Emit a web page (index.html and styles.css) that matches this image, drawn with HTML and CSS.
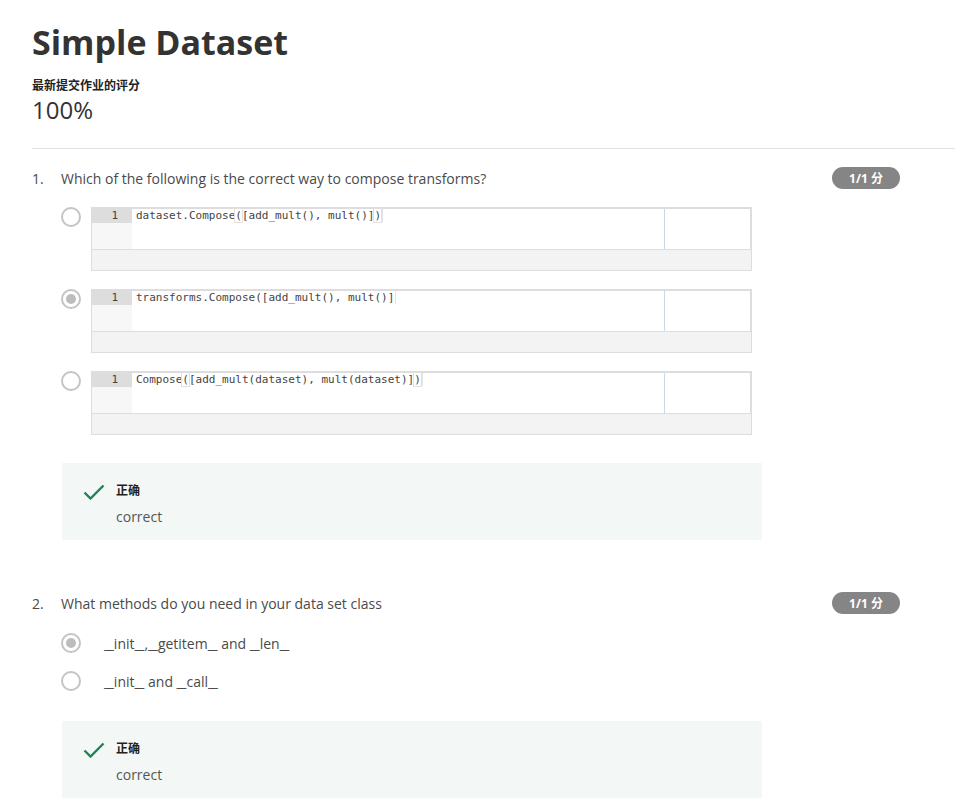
FILE: index.html
```html
<!DOCTYPE html>
<html lang="zh">
<head>
<meta charset="utf-8">
<title>Simple Dataset</title>
<link rel="stylesheet" href="styles.css">
</head>
<body>
<div class="page">
  <header class="head">
    <h1 class="title">Simple Dataset</h1>
    <div class="grade-label">最新提交作业的评分</div>
    <div class="grade">100%</div>
  </header>

  <section class="question">
    <div class="q-row">
      <span class="q-num">1.</span>
      <span class="q-text">Which of the following is the correct way to compose transforms?</span>
      <span class="badge">1/1 分</span>
    </div>
    <div class="options code-options">
      <div class="code-opt">
        <span class="radio"></span>
        <div class="code">
          <div class="editor">
            <div class="gutter"><div class="ln">1</div></div>
            <div class="src"><span>dataset.Compose<span class="br">(</span>[add_mult(), mult()]<span class="br">)</span></span></div>
            <div class="side"></div>
          </div>
          <div class="strip"></div>
        </div>
      </div>
      <div class="code-opt">
        <span class="radio checked"></span>
        <div class="code">
          <div class="editor">
            <div class="gutter"><div class="ln">1</div></div>
            <div class="src"><span>transforms.Compose([add_mult(), mult()]</span></div>
            <div class="side"></div>
          </div>
          <div class="strip"></div>
        </div>
      </div>
      <div class="code-opt">
        <span class="radio"></span>
        <div class="code">
          <div class="editor">
            <div class="gutter"><div class="ln">1</div></div>
            <div class="src"><span>Compose<span class="br">(</span>[add_mult(dataset), mult(dataset)]<span class="br">)</span></span></div>
            <div class="side"></div>
          </div>
          <div class="strip"></div>
        </div>
      </div>
    </div>
    <div class="feedback">
      <svg class="check" width="22" height="16" viewBox="0 0 22 16"><path d="M1.5 8.5 L7.5 14.5 L20.5 1.5" fill="none" stroke="#1f8354" stroke-width="2.4"/></svg>
      <div class="fb-body">
        <div class="fb-title">正确</div>
        <div class="fb-text">correct</div>
      </div>
    </div>
  </section>

  <section class="question q2">
    <div class="q-row">
      <span class="q-num">2.</span>
      <span class="q-text">What methods do you need in your data set class</span>
      <span class="badge">1/1 分</span>
    </div>
    <div class="options text-options">
      <div class="text-opt"><span class="radio checked"></span><span class="opt-label"><span class="u">_</span>_init<span class="u">_</span>_,<span class="u">_</span>_getitem<span class="u">_</span>_ and <span class="u">_</span>_len<span class="u">_</span>_</span></div>
      <div class="text-opt"><span class="radio"></span><span class="opt-label"><span class="u">_</span>_init<span class="u">_</span>_ and <span class="u">_</span>_call<span class="u">_</span>_</span></div>
    </div>
    <div class="feedback">
      <svg class="check" width="22" height="16" viewBox="0 0 22 16"><path d="M1.5 8.5 L7.5 14.5 L20.5 1.5" fill="none" stroke="#1f8354" stroke-width="2.4"/></svg>
      <div class="fb-body">
        <div class="fb-title">正确</div>
        <div class="fb-text">correct</div>
      </div>
    </div>
  </section>
</div>
</body>
</html>
```

FILE: styles.css
```css
* { box-sizing: border-box; }
html, body { margin: 0; padding: 0; background: #fff; }
body {
  font-family: "Open Sans", "Noto Sans CJK SC", sans-serif;
  color: #373a3c;
}
.page { padding-left: 32px; }

.head { border-bottom: 1px solid #e1e1e1; padding-bottom: 23px; }
.title {
  margin: 0;
  padding-top: 17px;
  font-size: 34px;
  line-height: 50px;
  font-weight: 700;
  color: #333;
}
.grade-label {
  margin-top: 9px;
  font-size: 12px;
  line-height: 18px;
  font-weight: 700;
  color: #222;
  font-family: "Noto Sans CJK SC", sans-serif;
}
.grade {
  margin-top: 1px;
  font-size: 24px;
  line-height: 30px;
  color: #333;
}

.question { padding-top: 18px; }
.q-row { display: flex; align-items: center; height: 22px; padding-right: 55px; }
.q-num { width: 29px; font-size: 14px; color: #4a4a4a; }
.q-text { flex: 1; font-size: 14px; color: #4a4a4a; }
.badge {
  width: 68px;
  height: 22px;
  border-radius: 11px;
  background: #858585;
  color: #fff;
  font-size: 12px;
  font-weight: 700;
  display: flex;
  align-items: center;
  justify-content: center;
}

.options { padding-left: 29px; }
.code-options { padding-top: 18px; display: flex; flex-direction: column; gap: 18px; }
.code-opt { display: flex; align-items: flex-start; gap: 10px; }

.radio {
  flex: none;
  width: 20px;
  height: 20px;
  border-radius: 50%;
  border: 2px solid #c4c4c4;
  position: relative;
  background: #fff;
}
.radio.checked::after {
  content: "";
  position: absolute;
  left: 3px; top: 3px;
  width: 10px; height: 10px;
  border-radius: 50%;
  background: #bdbdbd;
}

.code { width: 661px; border-left: 1px solid #ddd; }
.editor {
  display: flex;
  height: 43px;
  border-top: 2px solid #ddd;
  border-right: 2px solid #ddd;
  border-bottom: 1px solid #ddd;
}
.gutter { width: 40px; background: #f7f7f7; }
.ln {
  height: 14px;
  background: #dddddd;
  font-family: "DejaVu Sans Mono", monospace;
  font-size: 11px;
  line-height: 14px;
  color: #444;
  text-align: right;
  padding-right: 14px;
}
.src {
  width: 533px;
  border-right: 1px solid #c9d8e2;
  padding-left: 4px;
  font-family: "DejaVu Sans Mono", monospace;
  font-size: 11px;
  line-height: 14px;
  color: #444;
  white-space: pre;
}
.src > span { border-right: 1px solid #e3e3e3; padding-right: 1px; }
.br { outline: 1px solid #e0e0e0; }
.side { flex: 1; background: #fff; }
.strip { height: 21px; background: #f3f3f3; border-right: 1px solid #ddd; border-bottom: 1px solid #ddd; }

.feedback {
  margin-top: 28px;
  margin-left: 30px;
  width: 700px;
  height: 77px;
  background: #f3f8f6;
  display: flex;
  align-items: flex-start;
  padding: 20px 0 0 21px;
}
.check { flex: none; margin-top: 1px; }
.fb-body { margin-left: 11px; }
.fb-title {
  font-family: "Noto Sans CJK SC", sans-serif;
  font-size: 12px;
  font-weight: 700;
  line-height: 14px;
  color: #222;
}
.fb-text { margin-top: 11px; font-size: 14px; line-height: 18px; color: #555; }

.q2 { margin-top: 52px; padding-top: 0; }
.text-options { padding-top: 19px; display: flex; flex-direction: column; gap: 18px; }
.text-opt { display: flex; align-items: center; height: 20px; }
.opt-label { margin-left: 23px; font-size: 14px; color: #4a4a4a; }
.u { letter-spacing: -2.4px; }
.q2 .feedback { margin-top: 30px; }
```
